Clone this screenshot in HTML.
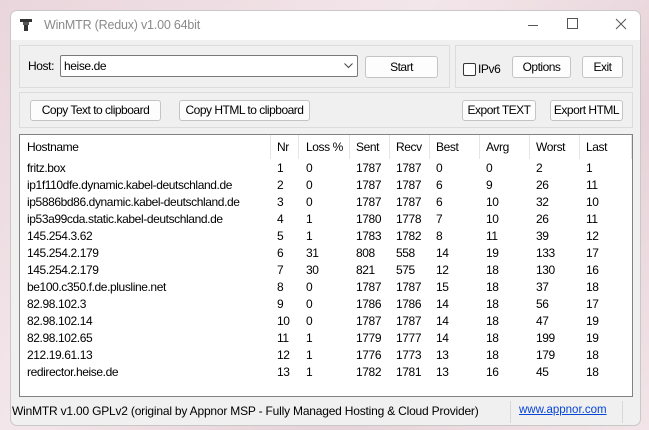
<!DOCTYPE html>
<html><head><meta charset="utf-8"><style>
*{margin:0;padding:0;box-sizing:border-box}
body{width:649px;height:430px;overflow:hidden;background:linear-gradient(135deg,#e9d6dc,#f3e6ea 40%,#e6d2d8 70%,#f2e4e8);font-family:"Liberation Sans",sans-serif;font-size:12px;color:#000;position:relative}
.win{position:absolute;left:10px;top:10px;width:631px;height:416px;background:#f0f0f0;border:1px solid #c8c8c8;border-radius:7px;overflow:hidden}
.title{position:absolute;left:0;top:0;width:100%;height:29px;background:#fff}
.title .t{position:absolute;left:33px;top:7px;color:#8a8a8a;font-size:12.5px;letter-spacing:-0.2px}
.abs{position:absolute}
.grp{position:absolute;border:1px solid #dcdcdc}
.btn{position:absolute;background:#fdfdfd;border:1px solid #c4c4c4;border-radius:3px;text-align:center;line-height:19px;font-size:12px;letter-spacing:-0.5px}
.list{position:absolute;left:8px;top:123px;width:614px;height:263px;background:#fff;border:1px solid #828282;letter-spacing:-0.4px}
.sep{position:absolute;top:0;width:1px;height:24px;background:#e5e5e5}
.row{position:absolute;left:0;height:17px;line-height:17px;width:100%}
.row span{position:absolute}
.c0{left:7px}.c1{left:257px}.c2{left:286px}.c3{left:336px}.c4{left:376px}.c5{left:416px}.c6{left:466px}.c7{left:516px}.c8{left:566px}
.status{position:absolute;left:0;top:387px;width:100%;height:29px;font-size:12px}
</style></head><body>
<div class="win">
 <div class="title">
  <svg class="abs" style="left:8px;top:7px" width="14" height="14"><rect x="1" y="1" width="12" height="3" fill="#333"/><rect x="4" y="4" width="6" height="3" fill="#555"/><rect x="5" y="7" width="4" height="6" fill="#333"/></svg>
  <div class="t">WinMTR (Redux) v1.00 64bit</div>
  <div class="abs" style="left:517px;top:14px;width:10px;height:1px;background:#555"></div>
  <div class="abs" style="left:556px;top:7px;width:11px;height:11px;border:1px solid #555"></div>
  <svg class="abs" style="left:604px;top:7px" width="12" height="12"><path d="M1 1L11 11M11 1L1 11" stroke="#555" stroke-width="1"/></svg>
 </div>
 <div class="grp" style="left:8px;top:34px;width:431px;height:43px"></div>
 <div class="grp" style="left:444px;top:34px;width:178px;height:43px"></div>
 <div class="abs" style="left:17px;top:48px;letter-spacing:-0.4px">Host:</div>
 <div class="abs" style="left:49px;top:44px;width:298px;height:22px;background:#fff;border:1px solid #7a7a7a;border-radius:2px"><span class="abs" style="left:3px;top:3px;letter-spacing:-0.4px">heise.de</span>
  <svg class="abs" style="left:283px;top:7px" width="9" height="6"><path d="M0.5 0.5L4.5 4.5L8.5 0.5" stroke="#444" fill="none"/></svg></div>
 <div class="btn" style="left:354px;top:45px;width:73px;height:22px;line-height:20px">Start</div>
 <div class="abs" style="left:452px;top:52px;width:13px;height:13px;border:1px solid #333;border-radius:2px;background:#fff"></div>
 <div class="abs" style="left:467px;top:51px;letter-spacing:-0.4px">IPv6</div>
 <div class="btn" style="left:501px;top:45px;width:59px;height:22px;line-height:20px">Options</div>
 <div class="btn" style="left:571px;top:45px;width:41px;height:22px;line-height:20px">Exit</div>
 <div class="grp" style="left:8px;top:81px;width:614px;height:36px"></div>
 <div class="btn" style="left:19px;top:89px;width:131px;height:21px">Copy Text to clipboard</div>
 <div class="btn" style="left:168px;top:89px;width:131px;height:21px">Copy HTML to clipboard</div>
 <div class="btn" style="left:451px;top:89px;width:74px;height:21px">Export TEXT</div>
 <div class="btn" style="left:539px;top:89px;width:73px;height:21px">Export HTML</div>
 <div class="list">
  <div class="sep" style="left:250px"></div><div class="sep" style="left:278px"></div><div class="sep" style="left:329px"></div><div class="sep" style="left:369px"></div><div class="sep" style="left:409px"></div><div class="sep" style="left:459px"></div><div class="sep" style="left:509px"></div><div class="sep" style="left:559px"></div><div class="sep" style="left:611px"></div>
  <div class="row" style="top:4px"><span class="c0">Hostname</span><span class="c1">Nr</span><span class="c2">Loss %</span><span class="c3">Sent</span><span class="c4">Recv</span><span class="c5">Best</span><span class="c6">Avrg</span><span class="c7">Worst</span><span class="c8">Last</span></div>
  <div class="row" style="top:25px"><span class="c0">fritz.box</span><span class="c1">1</span><span class="c2">0</span><span class="c3">1787</span><span class="c4">1787</span><span class="c5">0</span><span class="c6">0</span><span class="c7">2</span><span class="c8">1</span></div>
  <div class="row" style="top:42px"><span class="c0">ip1f110dfe.dynamic.kabel-deutschland.de</span><span class="c1">2</span><span class="c2">0</span><span class="c3">1787</span><span class="c4">1787</span><span class="c5">6</span><span class="c6">9</span><span class="c7">26</span><span class="c8">11</span></div>
  <div class="row" style="top:59px"><span class="c0">ip5886bd86.dynamic.kabel-deutschland.de</span><span class="c1">3</span><span class="c2">0</span><span class="c3">1787</span><span class="c4">1787</span><span class="c5">6</span><span class="c6">10</span><span class="c7">32</span><span class="c8">10</span></div>
  <div class="row" style="top:76px"><span class="c0">ip53a99cda.static.kabel-deutschland.de</span><span class="c1">4</span><span class="c2">1</span><span class="c3">1780</span><span class="c4">1778</span><span class="c5">7</span><span class="c6">10</span><span class="c7">26</span><span class="c8">11</span></div>
  <div class="row" style="top:93px"><span class="c0">145.254.3.62</span><span class="c1">5</span><span class="c2">1</span><span class="c3">1783</span><span class="c4">1782</span><span class="c5">8</span><span class="c6">11</span><span class="c7">39</span><span class="c8">12</span></div>
  <div class="row" style="top:110px"><span class="c0">145.254.2.179</span><span class="c1">6</span><span class="c2">31</span><span class="c3">808</span><span class="c4">558</span><span class="c5">14</span><span class="c6">19</span><span class="c7">133</span><span class="c8">17</span></div>
  <div class="row" style="top:127px"><span class="c0">145.254.2.179</span><span class="c1">7</span><span class="c2">30</span><span class="c3">821</span><span class="c4">575</span><span class="c5">12</span><span class="c6">18</span><span class="c7">130</span><span class="c8">16</span></div>
  <div class="row" style="top:144px"><span class="c0">be100.c350.f.de.plusline.net</span><span class="c1">8</span><span class="c2">0</span><span class="c3">1787</span><span class="c4">1787</span><span class="c5">15</span><span class="c6">18</span><span class="c7">37</span><span class="c8">18</span></div>
  <div class="row" style="top:161px"><span class="c0">82.98.102.3</span><span class="c1">9</span><span class="c2">0</span><span class="c3">1786</span><span class="c4">1786</span><span class="c5">14</span><span class="c6">18</span><span class="c7">56</span><span class="c8">17</span></div>
  <div class="row" style="top:178px"><span class="c0">82.98.102.14</span><span class="c1">10</span><span class="c2">0</span><span class="c3">1787</span><span class="c4">1787</span><span class="c5">14</span><span class="c6">18</span><span class="c7">47</span><span class="c8">19</span></div>
  <div class="row" style="top:195px"><span class="c0">82.98.102.65</span><span class="c1">11</span><span class="c2">1</span><span class="c3">1779</span><span class="c4">1777</span><span class="c5">14</span><span class="c6">18</span><span class="c7">199</span><span class="c8">19</span></div>
  <div class="row" style="top:212px"><span class="c0">212.19.61.13</span><span class="c1">12</span><span class="c2">1</span><span class="c3">1776</span><span class="c4">1773</span><span class="c5">13</span><span class="c6">18</span><span class="c7">179</span><span class="c8">18</span></div>
  <div class="row" style="top:229px"><span class="c0">redirector.heise.de</span><span class="c1">13</span><span class="c2">1</span><span class="c3">1782</span><span class="c4">1781</span><span class="c5">13</span><span class="c6">16</span><span class="c7">45</span><span class="c8">18</span></div>
 </div>
 <div class="status">
  <div class="abs" style="left:1px;top:6px;letter-spacing:-0.2px">WinMTR v1.00 GPLv2 (original by Appnor MSP - Fully Managed Hosting &amp; Cloud Provider)</div>
  <div class="abs" style="left:499px;top:3px;width:1px;height:22px;background:#d8d8d8"></div>
  <div class="abs" style="left:508px;top:6px;color:#0645d6;text-decoration:underline;font-size:11.5px">www.appnor.com</div>
  <div class="abs" style="left:611px;top:3px;width:1px;height:22px;background:#d8d8d8"></div>
 </div>
</div>
</body></html>
